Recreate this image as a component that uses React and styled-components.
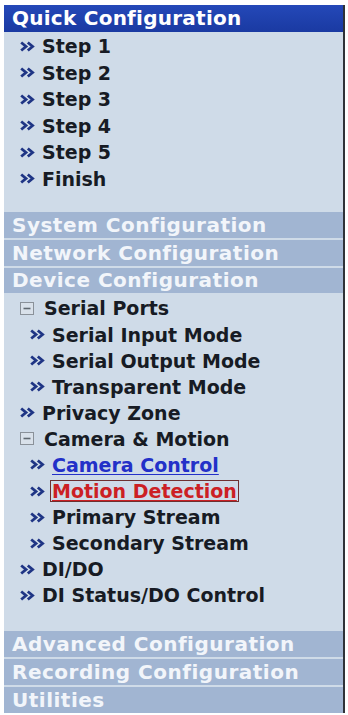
import React from "react";
import styled, { createGlobalStyle } from "styled-components";

const GlobalStyle = createGlobalStyle`
    html, body {
        margin: 0;
        padding: 0;
        background: #ffffff;
    }
`;

// Outer frame with the white margin round the menu
const Frame = styled.div`
    width: 348px;
    height: 715px;
    box-sizing: border-box;
    padding: 5px 3px 2px 4px;
    background: #ffffff;
    font-family: "DejaVu Sans", Verdana, sans-serif;
`;

const Menu = styled.div`
    height: 100%;
    display: flex;
    flex-direction: column;
    background: #cfdbe8;
    border-right: 2px solid #2e3238;
    overflow: hidden;
`;

const Header = styled.div`
    height: 27px;
    display: flex;
    align-items: center;
    padding-left: 8px;
    background: linear-gradient(#2448b8, #1a3aa2);
    color: #ffffff;
    font-size: 20px;
    font-weight: bold;
    letter-spacing: 0.25px;
`;

const Band = styled.div`
    height: 26px;
    display: flex;
    align-items: center;
    padding-left: 8px;
    margin-top: ${(p) => p.$gap ?? 2}px;
    background: #a1b5d2;
    color: #f2f5fa;
    font-size: 20px;
    font-weight: bold;
    letter-spacing: 0.5px;
    white-space: nowrap;
`;

const List = styled.div`
    display: flex;
    flex-direction: column;
    padding: ${(p) => p.$pad || "0"};
`;

const Row = styled.div`
    height: ${(p) => p.$h || 26.1}px;
    display: flex;
    align-items: center;
    padding-left: ${(p) => p.$indent}px;
    font-size: 19px;
    font-weight: bold;
    color: #171b24;
    white-space: nowrap;
`;

const Chevron = styled.svg`
    width: 15px;
    height: 11px;
    margin-right: 6px;
    flex: none;
`;

const Toggle = styled.svg`
    width: 14px;
    height: 13px;
    margin-right: 9px;
    flex: none;
`;

const Label = styled.span`
    color: ${(p) => (p.$state === "active" ? "#cc1f24" : p.$state === "link" ? "#2330c8" : "inherit")};
    text-decoration: ${(p) => (p.$state ? "underline" : "none")};
    text-underline-offset: 2px;
    outline: ${(p) => (p.$state === "active" ? "1px solid #6e3030" : "none")};
    line-height: 20px;
    padding: 0 1px;
`;

function Arrows() {
    return (
        <Chevron viewBox="0 0 15 11">
            <path d="M1.2 1.5 L6 5.5 L1.2 9.5" fill="none" stroke="#1f3585" strokeWidth="2.8" />
            <path d="M7.8 1.5 L12.6 5.5 L7.8 9.5" fill="none" stroke="#1f3585" strokeWidth="2.8" />
        </Chevron>
    );
}

function Minus() {
    return (
        <Toggle viewBox="0 0 14 13">
            <rect x="0.5" y="0.5" width="13" height="12" fill="#d9e1ea" stroke="#8a9199" />
            <path d="M3.5 6.5 H10.5" stroke="#606870" strokeWidth="1.6" />
        </Toggle>
    );
}

function Item({ indent, children, state, h }) {
    return (
        <Row $indent={indent} $h={h}>
            <Arrows />
            <Label $state={state}>{children}</Label>
        </Row>
    );
}

function Folder({ indent, children }) {
    return (
        <Row $indent={indent}>
            <Minus />
            <Label>{children}</Label>
        </Row>
    );
}

const steps = ["Step 1", "Step 2", "Step 3", "Step 4", "Step 5", "Finish"];

export default function App() {
    return (
        <Frame>
            <GlobalStyle />
            <Menu>
                <Header>Quick Configuration</Header>
                <List $pad="1px 0 20px">
                    {steps.map((s) => (
                        <Item key={s} indent={16} h={26.5}>{s}</Item>
                    ))}
                </List>
                <Band $gap={0}>System Configuration</Band>
                <Band>Network Configuration</Band>
                <Band>Device Configuration</Band>
                <List $pad="2px 0 23px">
                    <Folder indent={16}>Serial Ports</Folder>
                    <Item indent={26}>Serial Input Mode</Item>
                    <Item indent={26}>Serial Output Mode</Item>
                    <Item indent={26}>Transparent Mode</Item>
                    <Item indent={16}>Privacy Zone</Item>
                    <Folder indent={16}>Camera &amp; Motion</Folder>
                    <Item indent={26} state="link">Camera Control</Item>
                    <Item indent={26} state="active">Motion Detection</Item>
                    <Item indent={26}>Primary Stream</Item>
                    <Item indent={26}>Secondary Stream</Item>
                    <Item indent={16}>DI/DO</Item>
                    <Item indent={16}>DI Status/DO Control</Item>
                </List>
                <Band $gap={0}>Advanced Configuration</Band>
                <Band>Recording Configuration</Band>
                <Band>Utilities</Band>
            </Menu>
        </Frame>
    );
}
